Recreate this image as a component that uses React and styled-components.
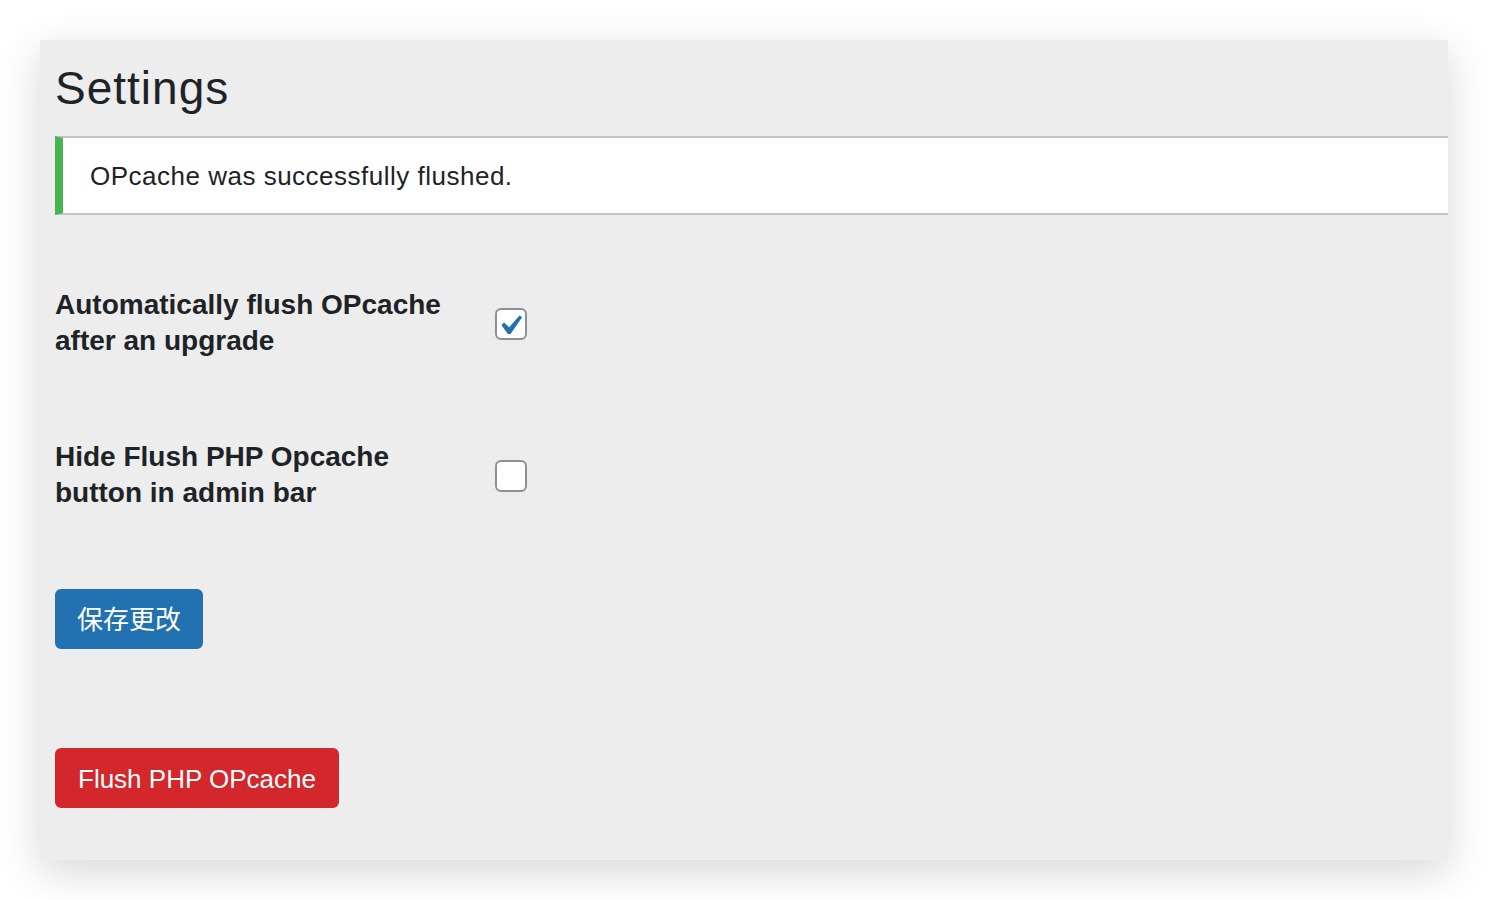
import React, { useState } from 'react';
import styled, { createGlobalStyle } from 'styled-components';

const GlobalStyle = createGlobalStyle`
  html, body {
    margin: 0;
    padding: 0;
    background: #ffffff;
  }
  body {
    font-family: "Liberation Sans", "Noto Sans CJK SC", Arial, sans-serif;
    color: #1d2327;
  }
`;

const Page = styled.div`
  padding: 40px;
  width: 1488px;
  height: 900px;
  box-sizing: border-box;
`;

const Panel = styled.div`
  width: 1408px;
  height: 820px;
  box-sizing: border-box;
  background: #ededed;
  box-shadow: 0 12px 40px rgba(0, 0, 0, 0.16);
  padding: 18px 0 0 15px;
`;

const Title = styled.h1`
  margin: 0 0 18px;
  font-size: 46px;
  line-height: 60px;
  font-weight: 400;
  letter-spacing: 1px;
  color: #1d2327;
`;

const Notice = styled.div`
  background: #ffffff;
  border-top: 2px solid #c3c4c7;
  border-bottom: 2px solid #c3c4c7;
  border-left: 8px solid #46b450;
  padding: 19px 0 17px 27px;
  font-size: 26px;
  line-height: 39px;
  letter-spacing: 0.5px;
  color: #1d2327;
`;

const Form = styled.div`
  margin-top: 32px;
`;

const Row = styled.div`
  display: flex;
  align-items: center;
  padding: 40px 0;
`;

const Label = styled.label`
  width: 440px;
  font-size: 28px;
  line-height: 36px;
  font-weight: 700;
  color: #1d2327;
`;

const Box = styled.span`
  width: 32px;
  height: 32px;
  box-sizing: border-box;
  margin-top: 2px;
  border: 2px solid #8c8f94;
  border-radius: 6px;
  background: #ffffff;
  display: flex;
  align-items: center;
  justify-content: center;
  cursor: pointer;
  svg {
    display: block;
  }
`;

const Button = styled.button`
  display: block;
  height: 60px;
  box-sizing: border-box;
  margin: 0;
  padding: 2px ${(p) => p.$padX || 20}px 0;
  border: 2px solid ${(p) => p.$bg};
  border-radius: 6px;
  background: ${(p) => p.$bg};
  color: #ffffff;
  font-family: "Liberation Sans", "Noto Sans CJK SC", Arial, sans-serif;
  font-size: 26px;
  line-height: 54px;
  cursor: pointer;
`;

const Submit = styled.div`
  padding-top: 38px;
`;

const FlushWrap = styled.div`
  padding-top: 99px;
`;

function Checkbox({ checked, onToggle }) {
  return (
    <Box role="checkbox" aria-checked={checked} onClick={onToggle}>
      {checked && (
        <svg width="28" height="28" viewBox="3.6 2.2 14 14">
          <path
            d="M14.83 4.89l1.34.94-5.81 8.38H9.02L5.78 9.67l1.34-1.25 2.57 2.4z"
            fill="#2271b1"
          />
        </svg>
      )}
    </Box>
  );
}

export default function App() {
  const [autoFlush, setAutoFlush] = useState(true);
  const [hideButton, setHideButton] = useState(false);

  return (
    <Page>
      <GlobalStyle />
      <Panel>
        <Title>Settings</Title>
        <Notice>OPcache was successfully flushed.</Notice>
        <Form>
          <Row>
            <Label>
              Automatically flush OPcache
              <br />
              after an upgrade
            </Label>
            <Checkbox checked={autoFlush} onToggle={() => setAutoFlush(!autoFlush)} />
          </Row>
          <Row>
            <Label>
              Hide Flush PHP Opcache
              <br />
              button in admin bar
            </Label>
            <Checkbox checked={hideButton} onToggle={() => setHideButton(!hideButton)} />
          </Row>
          <Submit>
            <Button $bg="#2271b1">保存更改</Button>
          </Submit>
        </Form>
        <FlushWrap>
          <Button $bg="#d3272b" $padX={21}>Flush PHP OPcache</Button>
        </FlushWrap>
      </Panel>
    </Page>
  );
}
